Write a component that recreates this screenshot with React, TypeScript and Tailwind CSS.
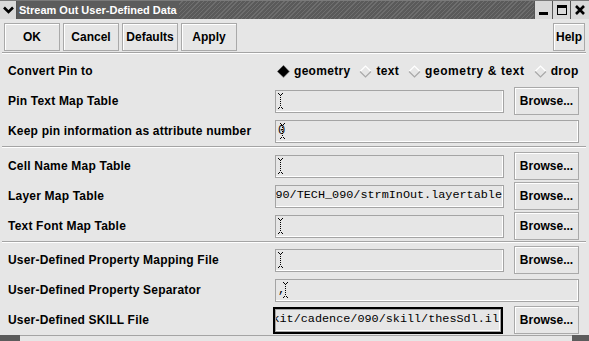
import React from "react";

const sans = "font-['Liberation_Sans',Arial,sans-serif]";
const mono = "font-['Liberation_Mono','Courier_New',monospace]";

const Cursor = ({ className = "" }: { className?: string }) => (
  <svg width="5" height="16" viewBox="0 0 5 16" className={`shrink-0 ${className}`}>
    <g fill="#000">
      <rect x="0" y="0" width="1" height="1" />
      <rect x="4" y="0" width="1" height="1" />
      <rect x="1" y="1" width="1" height="1" />
      <rect x="3" y="1" width="1" height="1" />
      {[2, 4, 6, 8, 10, 12].map((y) => (
        <rect key={y} x="2" y={y} width="1" height="1" />
      ))}
      <rect x="1" y="14" width="1" height="1" />
      <rect x="3" y="14" width="1" height="1" />
      <rect x="0" y="15" width="1" height="1" />
      <rect x="4" y="15" width="1" height="1" />
    </g>
  </svg>
);

const Diamond = ({ on }: { on?: boolean }) => (
  <svg width="13" height="13" viewBox="0 0 13 13" className="shrink-0">
    {on ? (
      <>
        <polygon points="6.5,0 13,6.5 6.5,13 0,6.5" fill="#8c8c8c" />
        <polygon points="6.5,0.5 12,6.5 6.5,12 0.5,6.5" fill="#000" />
      </>
    ) : (
      <>
        <polygon points="6.5,1 12,6.5 6.5,12 1,6.5" fill="#e6e6e6" />
        <polyline points="1,6.5 6.5,1 12,6.5" fill="none" stroke="#ffffff" strokeWidth="1.2" />
        <polyline points="1,6.5 6.5,12 12,6.5" fill="none" stroke="#a8a8a8" strokeWidth="1.2" />
      </>
    )}
  </svg>
);

const Btn = ({ children, className = "" }: { children: React.ReactNode; className?: string }) => (
  <div
    className={`flex items-center justify-center border border-[#a9a9a9] shadow-[inset_1px_1px_0_#ffffff] bg-[#e6e6e6] text-[12px] font-bold text-black ${className}`}
  >
    {children}
  </div>
);

const Field = ({
  text,
  lead,
  cursor,
  full,
  focus,
}: {
  text?: string;
  lead?: string;
  cursor?: boolean;
  full?: boolean;
  focus?: boolean;
}) => {
  const inner = (
    <div
      className={`flex items-center ${text ? (focus ? "justify-end pr-[1px]" : "justify-end pr-[1px]") : "pl-[2px]"} overflow-hidden h-[23px] border border-[#a4a4a4] shadow-[inset_-1px_-1px_0_#ffffff] bg-[#e6e6e6] ${
        full ? "w-[304px]" : focus ? "w-[226px]" : "w-[229px]"
      }`}
    >
      {text ? (
        <span className={`${mono} text-[11.8px] whitespace-nowrap text-black`}>{text}</span>
      ) : (
        <>
          {lead && (
            <span className={`${mono} text-[12px] leading-none text-black mr-[-5px]`}>{lead}</span>
          )}
          {cursor && <Cursor className={lead === "," ? "ml-[3px]" : ""} />}
        </>
      )}
    </div>
  );
  if (focus)
    return <div className="border-2 border-black ml-[-2px] mr-[1px]">{inner}</div>;
  return inner;
};

const Row = ({
  label,
  children,
}: {
  label: string;
  children?: React.ReactNode;
}) => (
  <div className="flex items-center h-[30px]">
    <div className="w-[275px] pl-[8px] text-[12px] tracking-[0.2px] font-bold text-black whitespace-nowrap">
      {label}
    </div>
    <div className="flex items-center">{children}</div>
  </div>
);

const Browse = () => <Btn className="w-[65px] h-[28px] ml-[10px]">Browse...</Btn>;

const Sep = () => (
  <div className="ml-[2px] w-[584px] h-[2px] border-t border-[#a4a4a4] border-b border-b-white" />
);

export default function App() {
  return (
    <div className={`${sans} w-[589px] h-[341px] bg-[#e6e6e6] flex flex-col overflow-hidden`}>
      {/* title bar */}
      <div className="h-[19px] flex bg-[#5c5c5c] border-t border-[#7a7a7a]">
        <div className="w-[17px] h-full bg-[#d9d9d9] flex items-center justify-center border-r border-[#555]">
          <svg width="11" height="8" viewBox="0 0 11 8">
            <polyline points="1,1.5 5.5,6 10,1.5" fill="none" stroke="#000" strokeWidth="2.6" />
          </svg>
        </div>
        <div className="pl-[2px] pr-[2px] flex items-center text-white font-bold text-[11px] whitespace-nowrap">
          Stream Out User-Defined Data
        </div>
        <div className="flex-1 bg-[repeating-linear-gradient(135deg,#5a5a5a_0px,#5a5a5a_2px,#6e6e6e_2px,#6e6e6e_3px)]" />
        <div className="flex">
          <div className="w-[18px] h-full bg-[#d9d9d9] border-l border-[#555] flex items-end justify-center pb-[4px]">
            <div className="w-[9px] h-[3px] bg-black" />
          </div>
          <div className="w-[18px] h-full bg-[#d9d9d9] border-l border-[#555] flex items-center justify-center">
            <div className="w-[10px] h-[10px] border border-black border-t-[3px]" />
          </div>
          <div className="w-[19px] h-full bg-[#d9d9d9] border-l border-[#555] flex items-center justify-center">
            <svg width="10" height="10" viewBox="0 0 10 10">
              <path d="M1 1 L9 9 M9 1 L1 9" stroke="#000" strokeWidth="2.6" />
            </svg>
          </div>
        </div>
      </div>

      {/* toolbar */}
      <div className="flex pt-[4px] pl-[4px] pr-[4px]">
        <div className="flex gap-[3px]">
          <Btn className="w-[56px] h-[28px]">OK</Btn>
          <Btn className="w-[56px] h-[28px]">Cancel</Btn>
          <Btn className="w-[56px] h-[28px]">Defaults</Btn>
          <Btn className="w-[56px] h-[28px]">Apply</Btn>
        </div>
        <div className="flex-1" />
        <Btn className="w-[32px] h-[28px]">Help</Btn>
      </div>
      <div className="h-[1px]" />
      <Sep />

      <div className="pt-[2px]">
        <Row label="Convert Pin to">
          <div className="flex items-center ml-[2px] text-[12px] tracking-[0.3px] font-bold text-black">
            <Diamond on />
            <span className="ml-[4px]">geometry</span>
            <span className="ml-[9px] flex"><Diamond /></span>
            <span className="ml-[4px]">text</span>
            <span className="ml-[9px] flex"><Diamond /></span>
            <span className="ml-[4px] tracking-[0.6px]">geometry &amp; text</span>
            <span className="ml-[9px] flex"><Diamond /></span>
            <span className="ml-[4px]">drop</span>
          </div>
        </Row>
        <Row label="Pin Text Map Table">
          <Field cursor />
          <Browse />
        </Row>
        <Row label="Keep pin information as attribute number">
          <Field full lead="0" cursor />
        </Row>
      </div>
      <Sep />

      <div className="pt-[3px]">
        <Row label="Cell Name Map Table">
          <Field cursor />
          <Browse />
        </Row>
        <Row label="Layer Map Table">
          <Field text="/home/tech/090/TECH_090/strmInOut.layertable" />
          <Browse />
        </Row>
        <Row label="Text Font Map Table">
          <Field cursor />
          <Browse />
        </Row>
      </div>
      <Sep />

      <div className="pt-[2px]">
        <Row label="User-Defined Property Mapping File">
          <Field cursor />
          <Browse />
        </Row>
        <Row label="User-Defined Property Separator">
          <Field full lead="," cursor />
        </Row>
        <Row label="User-Defined SKILL File">
          <Field focus text="/home/designkit/cadence/090/skill/thesSdl.il" />
          <Browse />
        </Row>
      </div>

      {/* bottom frame */}
      <div className="flex-1 flex items-stretch">
        <div className="w-[20px] bg-[#5c5c5c]" />
        <div className="flex-1 border-t border-[#a4a4a4] bg-[#e6e6e6]" />
        <div className="w-[17px] bg-[#5c5c5c]" />
      </div>
    </div>
  );
}
